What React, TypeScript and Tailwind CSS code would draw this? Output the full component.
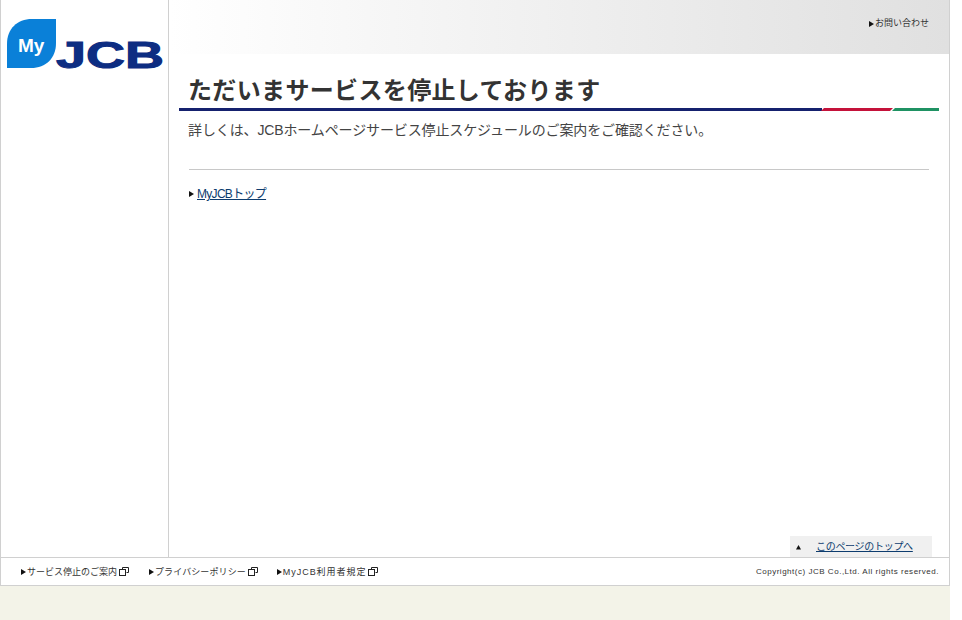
const jp = "font-['Liberation_Sans','Noto_Sans_CJK_JP',sans-serif]";

function Arrow({ up }: { up?: boolean }) {
  return (
    <svg width="5" height="6" viewBox="0 0 5 6" className="shrink-0">
      {up ? <path d="M0 5.5 L2.5 1 L5 5.5 Z" fill="#111" /> : <path d="M0 0 L5 3 L0 6 Z" fill="#111" />}
    </svg>
  );
}

function WindowIcon() {
  return (
    <svg width="10" height="9" viewBox="0 0 10 9" className="shrink-0" fill="none" stroke="#222" strokeWidth="1">
      <path d="M3.5 2.5 V0.5 H9.5 V5.5 H7.5" />
      <rect x="0.5" y="2.5" width="6" height="6" fill="#fff" />
    </svg>
  );
}

function Logo() {
  return (
    <svg width="160" height="62" viewBox="0 0 160 62" className="block">
      <path d="M49 0 V24 C49 39 39 49 24 49 H0 V25 C0 10 10 0 25 0 Z" fill="#0a80d8" />
      <text x="11" y="33" fill="#fff" fontSize="19" fontWeight="700" fontFamily="'Liberation Sans',sans-serif">
        My
      </text>
      <text
        x="49"
        y="49"
        fill="#0d2d82"
        stroke="#0d2d82"
        strokeWidth="1"
        fontSize="37"
        fontWeight="700"
        fontFamily="'Liberation Sans',sans-serif"
        textLength="108"
        lengthAdjust="spacingAndGlyphs"
      >
        JCB
      </text>
    </svg>
  );
}

function FooterLink({ label, className }: { label: string; className?: string }) {
  return (
    <a className={`flex items-center gap-[1px] text-[9px] leading-[14px] text-[#333] ${className ?? ""}`}>
      <Arrow />
      <span className="mr-[1px]">{label}</span>
      <WindowIcon />
    </a>
  );
}

export default function App() {
  return (
    <div className={`${jp} bg-white min-h-[620px]`}>
      <div className="w-[950px] flex flex-col">
        <div className="flex h-[558px] border-x border-b border-[#d0d0d0]">
          <aside className="w-[168px] shrink-0 border-r border-[#d0d0d0] pt-[19px] pl-[6px]">
            <Logo />
          </aside>
          <main className="flex-1 flex flex-col">
            <div className="h-[54px] bg-gradient-to-r from-white to-[#e0e0e0] flex justify-end pt-[18px] pr-[20px]">
              <a className="flex items-center gap-[1px] h-[12px] text-[9px] text-[#333]">
                <Arrow />
                お問い合わせ
              </a>
            </div>
            <div className="flex-1 flex flex-col pl-[10px] pr-[10px]">
              <h1 className="pl-[9px] mt-[21px] h-[33px] text-[24px] leading-[32px] font-bold text-[#333] tracking-[0.35px]">
                ただいまサービスを停止しております
              </h1>
              <div className="flex h-[3px]">
                <div className="flex-1 bg-[#15216e]" />
                <div className="w-[72px] -ml-[1px] bg-[#c4123a] [clip-path:polygon(3px_0,100%_0,calc(100%-3px)_100%,0_100%)]" />
                <div className="w-[47px] -ml-[1px] bg-[#1f9263] [clip-path:polygon(3px_0,100%_0,100%_100%,0_100%)]" />
              </div>
              <p className="pl-[9px] mt-[10px] text-[14px] leading-[18px] text-[#444] tracking-[-0.12px]">
                詳しくは、JCBホームページサービス停止スケジュールのご案内をご確認ください。
              </p>
              <div className="ml-[10px] mr-[10px] mt-[30px] border-t border-[#c8c8c8]" />
              <a className="ml-[10px] mt-[16px] flex items-center gap-[3px] text-[12px] leading-[16px]">
                <Arrow />
                <span className="text-[#0d3c6e] underline tracking-[-0.7px]">MyJCBトップ</span>
              </a>
              <div className="mt-auto self-end mr-[7px] w-[142px] h-[21px] bg-[#f0f0f0] flex items-center pl-[6px]">
                <Arrow up />
                <a className="ml-[15px] text-[10px] leading-[12px] text-[#0d3c6e] underline tracking-[-0.3px]">
                  このページのトップへ
                </a>
              </div>
            </div>
          </main>
        </div>
        <footer className="h-[28px] border-x border-b border-[#d0d0d0] flex items-center justify-between pl-[20px] pr-[10px]">
          <div className="flex items-center gap-[20px]">
            <FooterLink label="サービス停止のご案内" />
            <FooterLink label="プライバシーポリシー" className="tracking-[0.1px]" />
            <FooterLink label="MyJCB利用者規定" className="-ml-[1px] tracking-[0.95px]" />
          </div>
          <span className="text-[8px] font-normal text-[#333] tracking-[0.52px]">Copyright(c) JCB Co.,Ltd. All rights reserved.</span>
        </footer>
        <div className="h-[34px] bg-[#f3f3e8]" />
      </div>
    </div>
  );
}
